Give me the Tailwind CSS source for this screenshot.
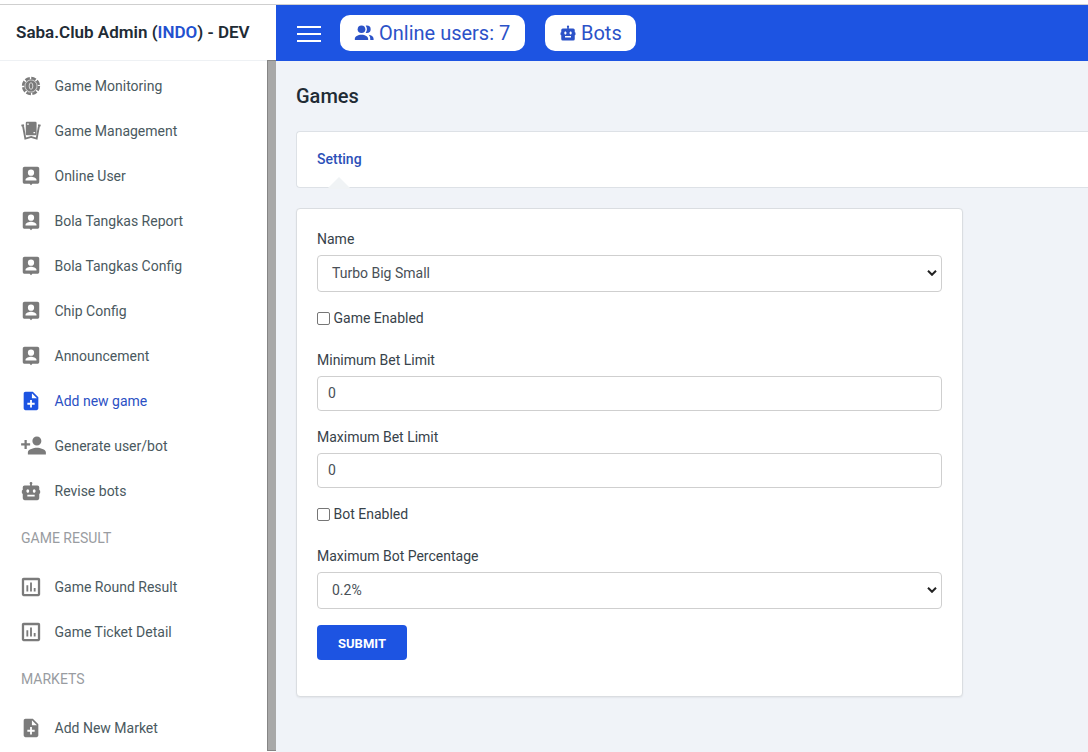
<!DOCTYPE html>
<html lang="en">
<head>
<meta charset="utf-8">
<title>Saba.Club Admin</title>
<script src="https://cdn.jsdelivr.net/npm/@tailwindcss/browser@4"></script>
</head>
<body class="h-[752px] w-[1088px] overflow-hidden bg-white font-['Roboto',sans-serif] text-sm text-[#212b35]">
<svg class="hidden">
  <symbol id="chip" viewBox="0 0 24 24"><circle cx="12" cy="12" r="8.600" fill="none" stroke="currentColor" stroke-width="2.800" stroke-dasharray="5.200 1.554"/><circle cx="12" cy="12" r="6.200" fill="currentColor"/><circle cx="12" cy="12" r="7" fill="none" stroke="currentColor" stroke-width=".8"/><ellipse cx="12" cy="12" rx="2" ry="3.600" fill="none" stroke="#fff" stroke-opacity=".75" stroke-width="1"/></symbol>
  <symbol id="cards" viewBox="0 0 24 24"><rect x="6.300" y="2" width="11.800" height="14.500" rx="1.300" fill="currentColor"/><path fill="none" stroke="currentColor" stroke-width="2" d="M1.500 6.200l2.800-.6M3.200 6l2.600 14.200 6.600-1.700M22.500 6.200l-2.800-.6M20.800 6l-2.600 14.200-6.400-1.700"/><path fill="#fff" d="M7.800 3.800h1.800v1.500H7.800zM14.700 13h1.800v1.500h-1.800z"/></symbol>
  <symbol id="pin" viewBox="0 0 24 24"><path fill="currentColor" d="M19 2H5c-1.100 0-2 .9-2 2v14.500c0 1.100.9 2 2 2h5.500l1.500 1.500 1.500-1.500H19c1.100 0 2-.9 2-2V4c0-1.100-.9-2-2-2z"/><circle cx="12" cy="8.400" r="3.400" fill="#fff"/><path fill="#fff" d="M18 17H6v-1c0-2.200 4-3.300 6-3.300s6 1.100 6 3.300z"/></symbol>
  <symbol id="note" viewBox="0 0 24 24"><path fill="currentColor" d="M14 2H6c-1.1 0-1.99.9-1.99 2L4 20c0 1.1.89 2 1.99 2H18c1.1 0 2-.9 2-2V8l-6-6zm2 14h-3v3h-2v-3H8v-2h3v-3h2v3h3v2zm-3-7V3.5L18.5 9H13z"/></symbol>
  <symbol id="padd" viewBox="0 0 24 24"><path fill="currentColor" d="M15 12c2.21 0 4-1.79 4-4s-1.79-4-4-4-4 1.79-4 4 1.79 4 4 4zm-9-2V7H4v3H1v2h3v3h2v-3h3v-2H6zm9 4c-2.67 0-8 1.34-8 4v2h16v-2c0-2.66-5.33-4-8-4z"/></symbol>
  <symbol id="bot" viewBox="0 0 24 24"><path fill="currentColor" d="M21 10.975V8a2 2 0 0 0-2-2h-6V4.688c.305-.274.5-.668.5-1.11a1.5 1.5 0 0 0-3 0c0 .442.195.836.5 1.11V6H5a2 2 0 0 0-2 2v2.998l-.072.005A.999.999 0 0 0 2 12v2a1 1 0 0 0 1 1v5a2 2 0 0 0 2 2h14a2 2 0 0 0 2-2v-5a1 1 0 0 0 1-1v-1.938a1.004 1.004 0 0 0-.072-.455c-.202-.488-.635-.605-.928-.632zM7 12c0-1.104.672-2 1.5-2s1.5.896 1.5 2-.672 2-1.5 2S7 13.104 7 12zm8.998 6c-1.001-.003-7.997 0-7.998 0v-2s7.001-.002 8.002 0l-.004 2zm-.498-4c-.828 0-1.5-.896-1.5-2s.672-2 1.5-2 1.5.896 1.5 2-.672 2-1.5 2z"/></symbol>
  <symbol id="poll" viewBox="0 0 24 24"><path fill="currentColor" d="M9 17H7v-7h2v7zm4 0h-2V7h2v10zm4 0h-2v-4h2v4zm2.500 2.500h-15v-15h15v15zM20 2H4c-1.100 0-2 .9-2 2v16c0 1.100.9 2 2 2h16c1.100 0 2-.9 2-2V4c0-1.100-.9-2-2-2z"/></symbol>
  <symbol id="users" viewBox="0 0 24 24"><circle cx="9" cy="7.500" r="4.600" fill="currentColor"/><path fill="currentColor" d="M1 20.500v-1.500c0-3 3.600-5 8-5s8 2 8 5v1.500zM14 11.600c.9-1.100 1.500-2.500 1.500-4.100s-.6-3-1.500-4.100c.5-.2 1-.4 1.500-.4a4.500 4.500 0 0 1 0 9c-.5 0-1-.2-1.500-.4zM17.500 14.200c3.300.4 6 2.300 6 4.800v1.500h-4V19c0-2-.8-3.600-2-4.800z"/></symbol>
</svg>
<div class="h-[5px] border-b border-[#cfcfcf]"></div>
<div class="flex h-[747px]">
  <aside class="flex w-[276px] shrink-0 flex-col">
    <div class="flex h-[56px] shrink-0 items-center border-b border-[#eef1f4] pl-4 text-[17px] font-semibold"><span class="whitespace-pre">Saba.Club Admin (<span class="text-[#2250cf]">INDO</span>) - DEV</span></div>
    <div class="flex h-[691px]">
      <nav class="flex-1 pt-0.5 text-[#4a5960]">
        <a class="flex h-[45px] items-center"><span class="ml-5 flex w-[34.500px] shrink-0 text-[#7b7b7b]"><svg class="size-[22px]"><use href="#chip"/></svg></span>Game Monitoring</a>
        <a class="flex h-[45px] items-center"><span class="ml-5 flex w-[34.500px] shrink-0 text-[#7b7b7b]"><svg class="size-[22px]"><use href="#cards"/></svg></span>Game Management</a>
        <a class="flex h-[45px] items-center"><span class="ml-5 flex w-[34.500px] shrink-0 text-[#7b7b7b]"><svg class="size-[22px]"><use href="#pin"/></svg></span>Online User</a>
        <a class="flex h-[45px] items-center"><span class="ml-5 flex w-[34.500px] shrink-0 text-[#7b7b7b]"><svg class="size-[22px]"><use href="#pin"/></svg></span>Bola Tangkas Report</a>
        <a class="flex h-[45px] items-center"><span class="ml-5 flex w-[34.500px] shrink-0 text-[#7b7b7b]"><svg class="size-[22px]"><use href="#pin"/></svg></span>Bola Tangkas Config</a>
        <a class="flex h-[45px] items-center"><span class="ml-5 flex w-[34.500px] shrink-0 text-[#7b7b7b]"><svg class="size-[22px]"><use href="#pin"/></svg></span>Chip Config</a>
        <a class="flex h-[45px] items-center"><span class="ml-5 flex w-[34.500px] shrink-0 text-[#7b7b7b]"><svg class="size-[22px]"><use href="#pin"/></svg></span>Announcement</a>
        <a class="flex h-[45px] items-center text-[#2b50c4]"><span class="ml-5 flex w-[34.500px] shrink-0 text-[#1d54e2]"><svg class="size-[22px]"><use href="#note"/></svg></span>Add new game</a>
        <a class="flex h-[45px] items-center"><span class="ml-5 flex w-[34.500px] shrink-0 text-[#7b7b7b]"><svg class="size-[27px]"><use href="#padd"/></svg></span>Generate user/bot</a>
        <a class="flex h-[45px] items-center"><span class="ml-5 flex w-[34.500px] shrink-0 text-[#7b7b7b]"><svg class="size-[22px]"><use href="#bot"/></svg></span>Revise bots</a>
        <div class="flex h-[51px] items-center pb-0.5 pl-[21px] text-[#999ca1]">GAME RESULT</div>
        <a class="flex h-[45px] items-center"><span class="ml-5 flex w-[34.500px] shrink-0 text-[#7b7b7b]"><svg class="size-[22px]"><use href="#poll"/></svg></span>Game Round Result</a>
        <a class="flex h-[45px] items-center"><span class="ml-5 flex w-[34.500px] shrink-0 text-[#7b7b7b]"><svg class="size-[22px]"><use href="#poll"/></svg></span>Game Ticket Detail</a>
        <div class="flex h-[51px] items-center pb-0.5 pl-[21px] text-[#999ca1]">MARKETS</div>
        <a class="flex h-[45px] items-center"><span class="ml-5 flex w-[34.500px] shrink-0 text-[#7b7b7b]"><svg class="size-[22px]"><use href="#note"/></svg></span>Add New Market</a>
      </nav>
      <div class="-mt-px h-[691px] w-[9px] border-t border-l border-b border-[#858585] bg-[#a8a8a8]"></div>
    </div>
  </aside>
  <main class="flex min-w-0 flex-1 flex-col bg-[#f0f3f8]">
    <header class="flex h-[56px] shrink-0 items-center bg-[#1d54e2] pl-[21px] text-xl text-[#2b52c8]">
      <div class="mt-0.5 mr-[19px] flex w-6 flex-col gap-1"><i class="h-0.5 bg-white"></i><i class="mt-px h-0.5 bg-white"></i><i class="mt-px h-0.5 bg-white"></i></div>
      <div class="mr-5 flex h-9 w-[185px] items-center rounded-[10px] bg-white pl-[14px]"><svg class="mr-[5px] size-5"><use href="#users"/></svg>Online users: 7</div>
      <div class="flex h-9 w-[91px] items-center rounded-[10px] bg-white pl-[14px]"><svg class="mr-1 size-[18px]"><use href="#bot"/></svg>Bots</div>
    </header>
    <div class="flex flex-col pl-5">
      <h1 class="mt-[21px] h-7 text-xl leading-7 font-medium">Games</h1>
      <div class="relative mt-[21px] flex h-[57px] items-center rounded-l border border-r-0 border-[#dde1e6] bg-white pb-0.5 pl-5 font-medium text-[#2b50b8]">Setting
        <svg class="absolute -bottom-0.5 left-[30px] h-[12px] w-[24px]" viewBox="0 0 22 11"><path fill="#f0f3f5" d="M0 11 11 0l11 11z"/></svg>
      </div>
      <form class="mt-5 flex h-[489px] w-[667px] flex-col rounded border border-[#dadde1] bg-white px-5 pt-5 text-[#37424a] shadow-[0_1px_2px_rgba(0,0,0,0.06)]">
        <label class="h-5 leading-5">Name</label>
        <div class="mt-[6px] flex h-[37px] shrink-0 items-center justify-between rounded border border-[#cfcfcf] pr-1 pb-px pl-[14px] text-[#495057]">Turbo Big Small<svg class="h-[6px] w-[10px]" viewBox="0 0 10 6"><path d="m1 .8 4 4 4-4" fill="none" stroke="#222" stroke-width="2"/></svg></div>
        <label class="mt-4 flex h-5 items-center"><span class="mt-px mr-[3.500px] size-[13px] rounded-[2px] border border-[#767676]"></span>Game Enabled</label>
        <label class="mt-[22px] h-5 leading-5">Minimum Bet Limit</label>
        <div class="mt-[6px] flex h-[35px] shrink-0 items-center rounded border border-[#cfcfcf] pb-px pl-[10px] text-[#495057]">0</div>
        <label class="mt-4 h-5 leading-5">Maximum Bet Limit</label>
        <div class="mt-[6px] flex h-[35px] shrink-0 items-center rounded border border-[#cfcfcf] pb-px pl-[10px] text-[#495057]">0</div>
        <label class="mt-4 flex h-5 items-center"><span class="mt-px mr-[3.500px] size-[13px] rounded-[2px] border border-[#767676]"></span>Bot Enabled</label>
        <label class="mt-[22px] h-5 leading-5">Maximum Bot Percentage</label>
        <div class="mt-[6px] flex h-[37px] shrink-0 items-center justify-between rounded border border-[#cfcfcf] pr-1 pb-px pl-[14px] text-[#495057]">0.2%<svg class="h-[6px] w-[10px]" viewBox="0 0 10 6"><path d="m1 .8 4 4 4-4" fill="none" stroke="#222" stroke-width="2"/></svg></div>
        <button class="mt-4 h-[35px] w-[90px] rounded bg-[#1d54e2] pt-[3px] text-[13px] font-bold text-white">SUBMIT</button>
      </form>
    </div>
  </main>
</div>
</body>
</html>
